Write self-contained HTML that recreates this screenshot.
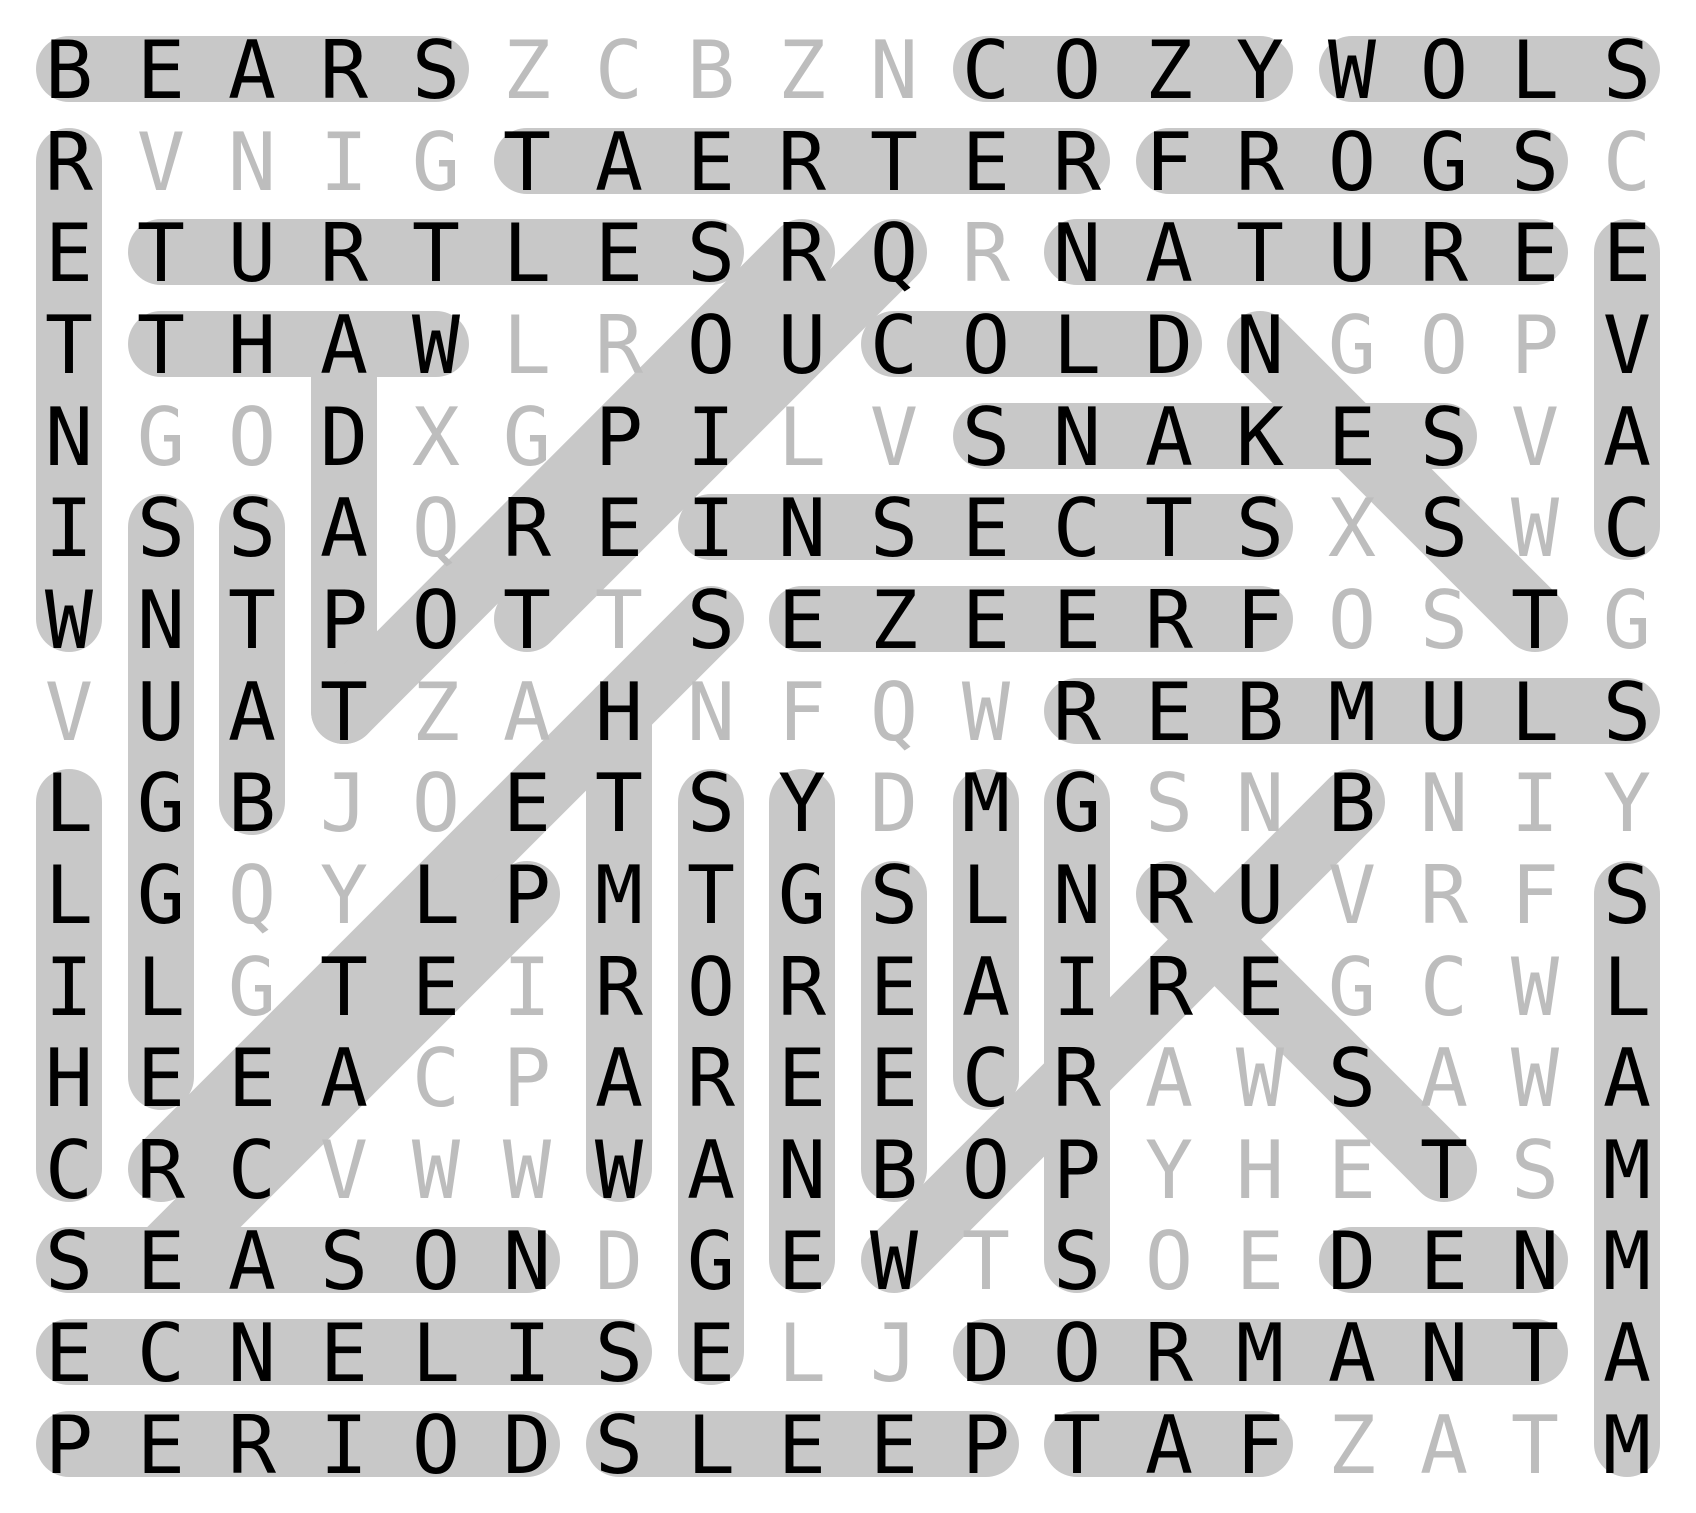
<!DOCTYPE html>
<html><head><meta charset="utf-8"><style>
html,body{margin:0;padding:0;background:#fff;}
svg{display:block;}
text{font-family:"DejaVu Sans Mono","Liberation Mono",monospace;font-size:80px;text-anchor:middle;}
.g{fill:#bdbdbd;}
.b{fill:#000;}
</style></head><body>
<svg width="1696" height="1513" viewBox="0 0 1696 1513" xmlns="http://www.w3.org/2000/svg">
<g stroke="#c8c8c8" stroke-width="66" stroke-linecap="round" fill="none">
<line x1="69" y1="69" x2="436" y2="69"/>
<line x1="986" y1="69" x2="1260" y2="69"/>
<line x1="1352" y1="69" x2="1627" y2="69"/>
<line x1="527" y1="161" x2="1077" y2="161"/>
<line x1="1169" y1="161" x2="1535" y2="161"/>
<line x1="161" y1="252" x2="711" y2="252"/>
<line x1="1077" y1="252" x2="1535" y2="252"/>
<line x1="161" y1="344" x2="436" y2="344"/>
<line x1="894" y1="344" x2="1169" y2="344"/>
<line x1="986" y1="436" x2="1444" y2="436"/>
<line x1="711" y1="527" x2="1260" y2="527"/>
<line x1="802" y1="619" x2="1260" y2="619"/>
<line x1="1077" y1="711" x2="1627" y2="711"/>
<line x1="69" y1="1260" x2="527" y2="1260"/>
<line x1="1352" y1="1260" x2="1535" y2="1260"/>
<line x1="69" y1="1352" x2="619" y2="1352"/>
<line x1="986" y1="1352" x2="1535" y2="1352"/>
<line x1="69" y1="1444" x2="527" y2="1444"/>
<line x1="619" y1="1444" x2="986" y2="1444"/>
<line x1="1077" y1="1444" x2="1260" y2="1444"/>
<line x1="69" y1="161" x2="69" y2="619"/>
<line x1="69" y1="802" x2="69" y2="1169"/>
<line x1="161" y1="527" x2="161" y2="1077"/>
<line x1="252" y1="527" x2="252" y2="802"/>
<line x1="344" y1="344" x2="344" y2="711"/>
<line x1="619" y1="711" x2="619" y2="1169"/>
<line x1="711" y1="802" x2="711" y2="1352"/>
<line x1="802" y1="802" x2="802" y2="1260"/>
<line x1="894" y1="894" x2="894" y2="1169"/>
<line x1="986" y1="802" x2="986" y2="1077"/>
<line x1="1077" y1="802" x2="1077" y2="1260"/>
<line x1="1627" y1="252" x2="1627" y2="527"/>
<line x1="1627" y1="894" x2="1627" y2="1444"/>
<line x1="344" y1="711" x2="802" y2="252"/>
<line x1="527" y1="619" x2="894" y2="252"/>
<line x1="711" y1="619" x2="161" y2="1169"/>
<line x1="527" y1="894" x2="161" y2="1260"/>
<line x1="1260" y1="344" x2="1535" y2="619"/>
<line x1="1352" y1="802" x2="894" y2="1260"/>
<line x1="1169" y1="894" x2="1444" y2="1169"/>
</g>
<text class="g" x="527 619 711 802 894" y="98">ZCBZN</text>
<text class="b" x="69 161 252 344 436 986 1077 1169 1260 1352 1444 1535 1627" y="98">BEARSCOZYWOLS</text>
<text class="g" x="161 252 344 436 1627" y="190">VNIGC</text>
<text class="b" x="69 527 619 711 802 894 986 1077 1169 1260 1352 1444 1535" y="190">RTAERTERFROGS</text>
<text class="g" x="986" y="281">R</text>
<text class="b" x="69 161 252 344 436 527 619 711 802 894 1077 1169 1260 1352 1444 1535 1627" y="281">ETURTLESRQNATUREE</text>
<text class="g" x="527 619 1352 1444 1535" y="373">LRGOP</text>
<text class="b" x="69 161 252 344 436 711 802 894 986 1077 1169 1260 1627" y="373">TTHAWOUCOLDNV</text>
<text class="g" x="161 252 436 527 802 894 1535" y="465">GOXGLVV</text>
<text class="b" x="69 344 619 711 986 1077 1169 1260 1352 1444 1627" y="465">NDPISNAKESA</text>
<text class="g" x="436 1352 1535" y="556">QXW</text>
<text class="b" x="69 161 252 344 527 619 711 802 894 986 1077 1169 1260 1444 1627" y="556">ISSAREINSECTSSC</text>
<text class="g" x="619 1352 1444 1627" y="648">TOSG</text>
<text class="b" x="69 161 252 344 436 527 711 802 894 986 1077 1169 1260 1535" y="648">WNTPOTSEZEERFT</text>
<text class="g" x="69 436 527 711 802 894 986" y="740">VZANFQW</text>
<text class="b" x="161 252 344 619 1077 1169 1260 1352 1444 1535 1627" y="740">UATHREBMULS</text>
<text class="g" x="344 436 894 1169 1260 1444 1535 1627" y="831">JODSNNIY</text>
<text class="b" x="69 161 252 527 619 711 802 986 1077 1352" y="831">LGBETSYMGB</text>
<text class="g" x="252 344 1352 1444 1535" y="923">QYVRF</text>
<text class="b" x="69 161 436 527 619 711 802 894 986 1077 1169 1260 1627" y="923">LGLPMTGSLNRUS</text>
<text class="g" x="252 527 1352 1444 1535" y="1015">GIGCW</text>
<text class="b" x="69 161 344 436 619 711 802 894 986 1077 1169 1260 1627" y="1015">ILTEROREAIREL</text>
<text class="g" x="436 527 1169 1260 1444 1535" y="1106">CPAWAW</text>
<text class="b" x="69 161 252 344 619 711 802 894 986 1077 1352 1627" y="1106">HEEAAREECRSA</text>
<text class="g" x="344 436 527 1169 1260 1352 1535" y="1198">VWWYHES</text>
<text class="b" x="69 161 252 619 711 802 894 986 1077 1444 1627" y="1198">CRCWANBOPTM</text>
<text class="g" x="619 986 1169 1260" y="1289">DTOE</text>
<text class="b" x="69 161 252 344 436 527 711 802 894 1077 1352 1444 1535 1627" y="1289">SEASONGEWSDENM</text>
<text class="g" x="802 894" y="1381">LJ</text>
<text class="b" x="69 161 252 344 436 527 619 711 986 1077 1169 1260 1352 1444 1535 1627" y="1381">ECNELISEDORMANTA</text>
<text class="g" x="1352 1444 1535" y="1473">ZAT</text>
<text class="b" x="69 161 252 344 436 527 619 711 802 894 986 1077 1169 1260 1627" y="1473">PERIODSLEEPTAFM</text>
</svg>
</body></html>
